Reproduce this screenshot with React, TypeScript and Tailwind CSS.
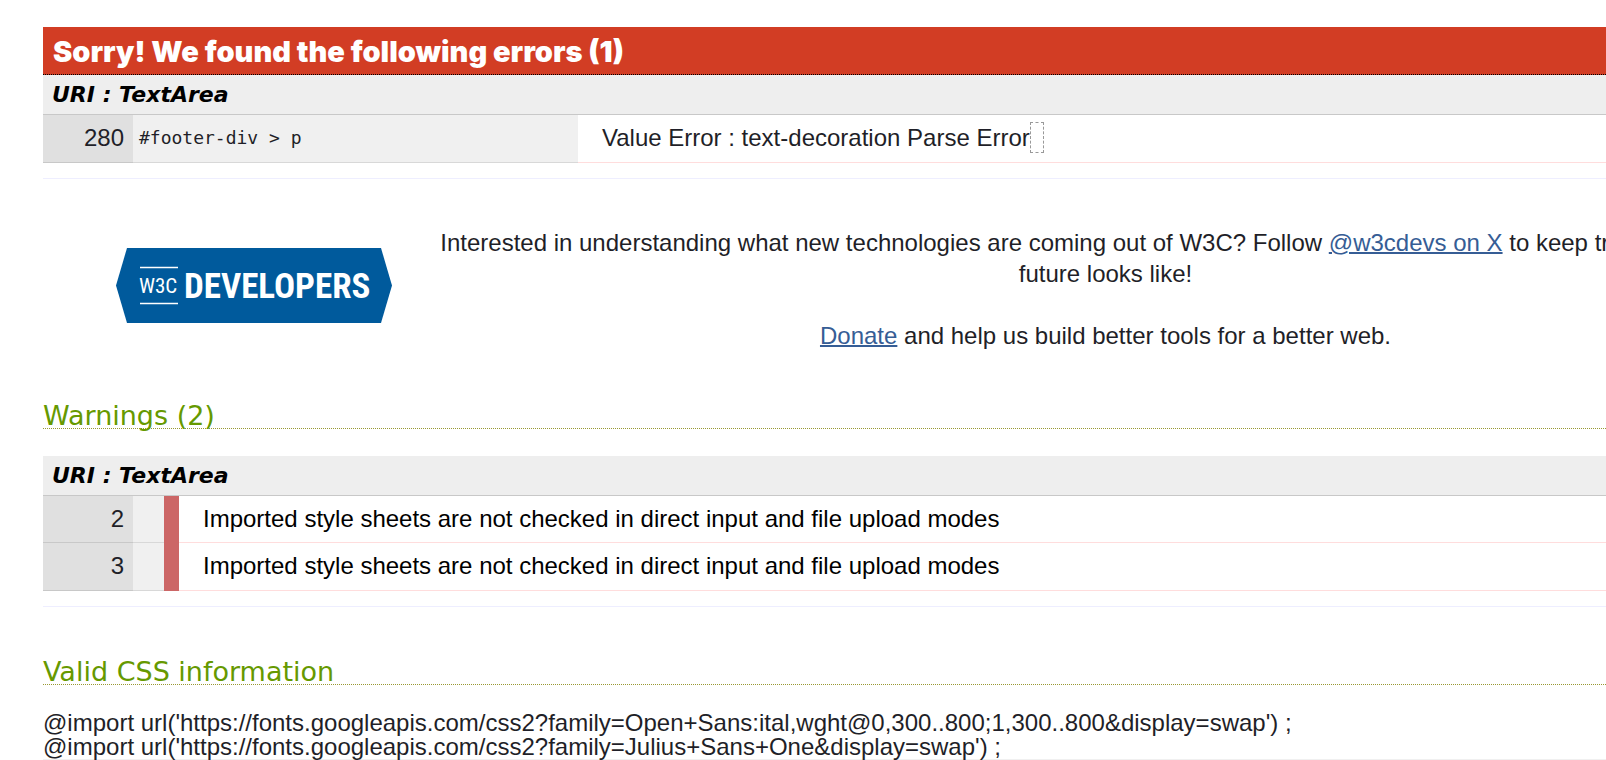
const warnings = [
  { line: 2, message: 'Imported style sheets are not checked in direct input and file upload modes' },
  { line: 3, message: 'Imported style sheets are not checked in direct input and file upload modes' },
];

const imports = [
  "@import url('https://fonts.googleapis.com/css2?family=Open+Sans:ital,wght@0,300..800;1,300..800&display=swap') ;",
  "@import url('https://fonts.googleapis.com/css2?family=Julius+Sans+One&display=swap') ;",
];

function UriHeading() {
  return (
    <h3 className="h-10 border-b border-[#c8c8c8] bg-[#eeeeee] pl-[9px] font-['DejaVu_Sans',sans-serif] text-[22px] leading-[40px] font-bold text-black italic">
      URI : TextArea
    </h3>
  );
}

function SectionHeading({ children }: { children: string }) {
  return (
    <h2 className="h-8 border-b border-dotted border-[#999933] font-['DejaVu_Sans',sans-serif] text-[27px] leading-[37px] text-[#669900]">
      {children}
    </h2>
  );
}

function DevelopersLogo() {
  return (
    <svg viewBox="0 0 276 75" className="h-[75px] w-[276px]" role="img" aria-label="W3C Developers">
      <polygon points="11,0 265,0 276,37.5 265,75 11,75 0,37.5" fill="#005a9c" />
      <path d="M24 19.5H62M24 55.5H62" stroke="#fff" strokeWidth="1.4" />
      <text x="23" y="45" fontSize="21" fill="#fff" fontFamily="'Roboto Condensed', Roboto, sans-serif">
        W3C
      </text>
      <text x="68" y="50" fontSize="35" fontWeight="700" fill="#fff" fontFamily="'Roboto Condensed', Roboto, sans-serif">
        DEVELOPERS
      </text>
    </svg>
  );
}

export default function App() {
  return (
    <div className="h-screen overflow-hidden bg-white font-['Liberation_Sans',Arial,sans-serif] text-[24px] leading-[31px] text-[#1f1f28]">
      <main className="-mr-48 pt-[27px] pl-[43px]">
        <section>
          <h2 className="h-12 border-b border-dotted border-black bg-[#d23d24] pl-[10px] font-['Inter',sans-serif] text-[29px] leading-[49px] font-black text-white">
            Sorry! We found the following errors (1)
          </h2>
          <UriHeading />
          <table className="w-full border-separate border-spacing-0">
            <tbody>
              <tr className="h-12">
                <td className="w-[90px] border-b border-[#c8c8c8] bg-[#e0e0e0] pr-[9px] pb-0.5 text-right">280</td>
                <td className="w-[445px] border-b border-[#d8d8d8] bg-[#f0f0f0] pb-0.5 pl-[6px]">
                  <code className="block font-['DejaVu_Sans_Mono',monospace] text-lg">#footer-div &gt; p</code>
                </td>
                <td className="border-b border-[#ffdddd] pb-0.5 pl-6">
                  <div className="flex items-center">
                    Value Error : text-decoration Parse Error
                    <span className="h-[31px] w-[14px] border border-dashed border-[#999999]" />
                  </div>
                </td>
              </tr>
            </tbody>
          </table>
          <div className="h-4 border-b border-[#eeeeff]" />
        </section>

        <section className="mt-12 flex items-start">
          <div className="shrink-0 pt-[21px] pl-[73px]">
            <DevelopersLogo />
          </div>
          <div className="flex-1 pl-[21px] text-center">
            <p>
              Interested in understanding what new technologies are coming out of W3C? Follow{' '}
              <a href="#w3cdevs" className="text-[#365d95] underline decoration-2">
                @w3cdevs on X
              </a>{' '}
              to keep track of what the future looks like!
            </p>
            <p className="mt-[31px]">
              <a href="#donate" className="text-[#365d95] underline decoration-2">
                Donate
              </a>{' '}
              and help us build better tools for a better web.
            </p>
          </div>
        </section>

        <section className="mt-[46px]">
          <SectionHeading>Warnings (2)</SectionHeading>
          <div className="mt-[27px]">
            <UriHeading />
            <table className="w-full border-separate border-spacing-0">
              <tbody>
                {warnings.map((warning) => (
                  <tr key={warning.line} className="h-[47px] last:h-12">
                    <td className="w-[90px] border-b border-[#c8c8c8] bg-[#e0e0e0] pr-[9px] pb-0.5 text-right">{warning.line}</td>
                    <td className="w-[31px] border-b border-[#d8d8d8] bg-[#f0f0f0]" />
                    <td className="w-[15px] border-b border-[#cc6666] bg-[#cc6666]" />
                    <td className="border-b border-[#ffdddd] pb-0.5 pl-6 text-black">{warning.message}</td>
                  </tr>
                ))}
              </tbody>
            </table>
            <div className="h-4 border-b border-[#eeeeff]" />
          </div>
        </section>

        <section className="mt-[46px]">
          <SectionHeading>Valid CSS information</SectionHeading>
          <div className="mt-[26px] border-b-2 border-[#f0f0f0] leading-6">
            {imports.map((rule) => (
              <p key={rule}>{rule}</p>
            ))}
          </div>
        </section>
      </main>
    </div>
  );
}
